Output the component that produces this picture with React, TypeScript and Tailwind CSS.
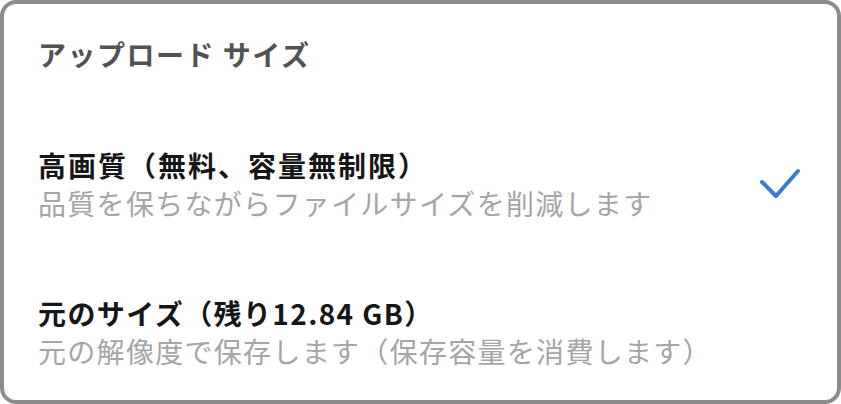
const font = "font-['Noto_Sans_CJK_JP','Noto_Sans',sans-serif]";

const options = [
  {
    title: '高画質（無料、容量無制限）',
    desc: '品質を保ちながらファイルサイズを削減します',
    titleTrack: 'tracking-[2px]',
    selected: true,
  },
  {
    title: '元のサイズ（残り12.84 GB）',
    desc: '元の解像度で保存します（保存容量を消費します）',
    titleTrack: 'tracking-[1.4px]',
    selected: false,
  },
];

function Check() {
  return (
    <svg width="42" height="32" viewBox="0 0 42 32" fill="none">
      <path
        d="M3 14 L17 28 L39 3"
        stroke="#3d7bd0"
        strokeWidth="4"
        strokeLinecap="round"
        strokeLinejoin="round"
      />
    </svg>
  );
}

export default function App() {
  return (
    <div className={`h-[404px] w-[841px] bg-white ${font}`}>
      <div className="flex h-full flex-col rounded-[16px] border-4 border-[#8c8c8c] bg-white pl-[34px] pr-[36px] pt-[32px]">
        <h1 className="text-[28px] leading-[36px] font-bold tracking-[1.5px] text-[#525252]">アップロード サイズ</h1>
        <div className="mt-[74px] flex flex-col gap-[72px]">
          {options.map((o) => (
            <div key={o.title} className="flex items-center justify-between">
              <div>
                <p className={`text-[28px] leading-[38px] font-bold text-[#161616] ${o.titleTrack}`}>{o.title}</p>
                <p className="text-[28px] leading-[38px] tracking-[1.3px] text-[#a5a5a5]">{o.desc}</p>
              </div>
              {o.selected && <Check />}
            </div>
          ))}
        </div>
      </div>
    </div>
  );
}
